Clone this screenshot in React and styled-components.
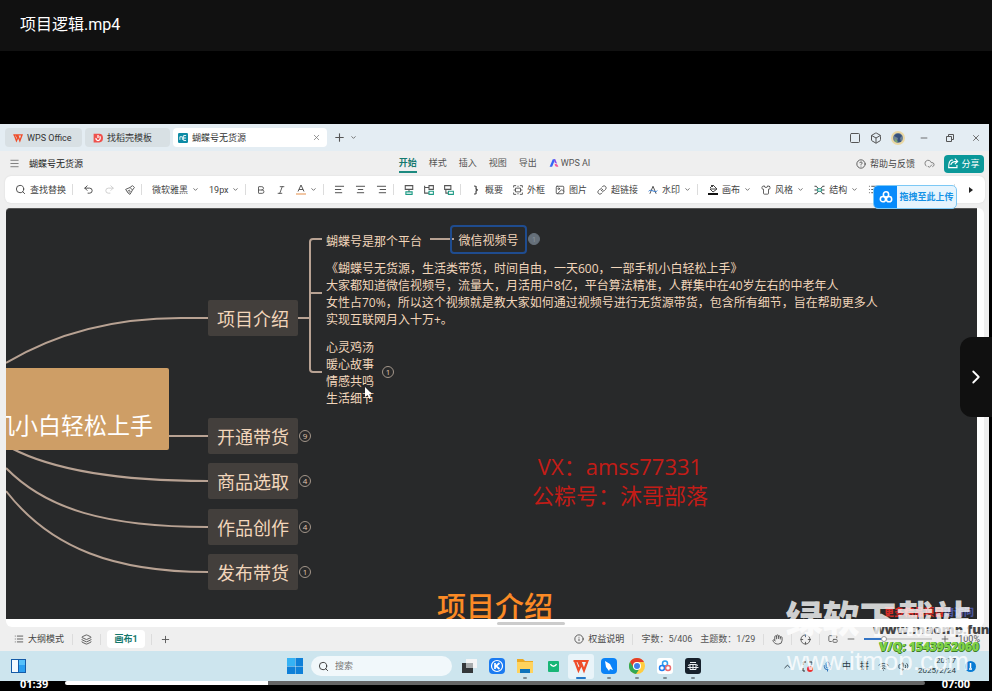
import React, { useState } from 'react';
import styled, { createGlobalStyle } from 'styled-components';
import {
  AlignCenter, AlignLeft, AlignRight, Bold, Box, ChevronDown, ChevronRight, ChevronUp, CircleHelp,
  CloudCheck, Copy, Crosshair, Hand, Image, Info, Italic, Layers, Link, List, Menu, Mic, Minus,
  PictureInPicture2, Plus, Redo2, Search, Shirt, Square, Undo2, Volume2, Wifi, X,
} from 'lucide-react';

const GlobalStyle = createGlobalStyle`
  * {
    box-sizing: border-box;
  }
  body {
    margin: 0;
    background-color: #000;
    font-family: Roboto, "Noto Sans CJK SC", sans-serif;
  }
  button, input, select {
    font: inherit;
    color: inherit;
    background: none;
    border: none;
    padding: 0;
    margin: 0;
  }
  svg {
    display: block;
    flex-shrink: 0;
  }
`
const Player = styled.div`
  position: relative;
  display: flex;
  flex-direction: column;
  min-height: 100vh;
  overflow: hidden;
`
const PlayerHeader = styled.header`
  display: flex;
  align-items: center;
  height: 51px;
  padding: 0 20px 2px;
  background-color: #111;
`
const PlayerTitle = styled.h1`
  margin: 0;
  color: #fff;
  font-size: 16px;
  font-weight: 400;
  line-height: 24px;
`
const Video = styled.main`
  position: relative;
  display: flex;
  flex-direction: column;
  margin: 73px 3px 0 0;
  background-color: #efefef;
  color: #444;
  font-size: 9px;
  line-height: 12px;
  white-space: nowrap;
`
const TabBar = styled.div`
  display: flex;
  align-items: center;
  gap: 3px;
  height: 27px;
  padding: 0 8px 0 5px;
  background-color: #e4edf3;
`
const Tab = styled.button`
  display: flex;
  align-items: center;
  gap: 4px;
  width: ${(props) => props.$width}px;
  height: 19px;
  padding: 0 6px 0 8px;
  border-radius: 4px;
  background-color: ${(props) => (props.$active ? '#fff' : '#d8e0e4')};
  color: #333;
  span {
    flex: 1;
    text-align: left;
  }
`
const ActiveTab = styled(Tab)`
  padding: 0 6px 0 5px;
`
const IconButton = styled.button`
  display: flex;
  align-items: center;
  justify-content: center;
  min-width: 10px;
  color: ${(props) => props.$color || '#555'};
`
const TabActions = styled.div`
  display: flex;
  align-items: center;
  gap: 2px;
  flex: 1;
  margin-left: 3px;
`
const WindowActions = styled.div`
  display: flex;
  align-items: center;
  gap: 9px;
`
const WindowControls = styled(WindowActions)`
  gap: 16px;
  margin-left: 11px;
`
const MenuBar = styled.div`
  display: grid;
  grid-template-columns: 1fr auto 1fr;
  align-items: center;
  height: 25px;
  padding: 0 5px 0 9px;
`
const DocName = styled.div`
  display: flex;
  align-items: center;
  gap: 9px;
  color: #222;
`
const MenuTabs = styled.nav`
  display: flex;
  gap: 12px;
  margin-right: 4px;
`
const MenuTab = styled.button`
  display: flex;
  align-items: center;
  gap: 2px;
  height: 18px;
  border-bottom: 2px solid ${(props) => (props.$active ? '#1d8a80' : 'transparent')};
  color: ${(props) => (props.$active ? '#15796f' : '#555')};
  font-weight: ${(props) => (props.$active ? 700 : 400)};
`
const MenuRight = styled.div`
  display: flex;
  align-items: center;
  justify-content: flex-end;
  gap: 9px;
  color: #333;
`
const ShareButton = styled.button`
  display: flex;
  align-items: center;
  justify-content: center;
  gap: 2px;
  width: 40px;
  height: 18px;
  border-radius: 4px;
  background-color: #0b9899;
  color: #fff;
`
const Toolbar = styled.div`
  display: flex;
  align-items: center;
  gap: 10px;
  height: 27px;
  margin: 0 4px 5px 5px;
  padding: 0 10px;
  border-radius: 6px;
  background-color: #fff;
  box-shadow: 0 0 2px rgba(0, 0, 0, 0.1);
  overflow: hidden;
`
const Tool = styled.button`
  display: flex;
  align-items: center;
  gap: 4px;
  color: #444;
`
const SelectTool = styled.label`
  display: flex;
  align-items: center;
  gap: 3px;
  select {
    appearance: none;
  }
`
const Divider = styled.i`
  width: 1px;
  height: 11px;
  margin-left: ${(props) => (props.$even ? 0 : -4)}px;
  background-color: #dcdcdc;
`
const Spacer = styled.div`
  flex: 1;
`
const UploadTip = styled.button`
  position: absolute;
  top: 61px;
  right: 32px;
  display: flex;
  align-items: center;
  width: 84px;
  height: 24px;
  border: 1px solid #7cc8f5;
  border-radius: 5px;
  background-color: #e6f4fd;
  color: #1592e6;
  font-weight: 700;
  overflow: hidden;
  span {
    flex: 1;
    text-align: center;
  }
`
const UploadLogo = styled.div`
  display: flex;
  align-items: center;
  justify-content: center;
  width: 23px;
  height: 24px;
  background-color: #078bfb;
  color: #fff;
`
const Sheet = styled.section`
  margin: 0 5px 0 6px;
  padding: 0 7px 8px 0;
  border-radius: 6px;
  background-color: #fff;
`
const Canvas = styled.div`
  position: relative;
  height: 411px;
  border-top: 1px solid #555;
  border-top-left-radius: 4px;
  background-color: #28292a;
  color: #f2d6bb;
  font-family: "Open Sans", "Noto Sans CJK SC", sans-serif;
  font-size: 12px;
  line-height: 17px;
  overflow: hidden;
`
const Branches = styled.svg`
  position: absolute;
  top: -1px;
  left: 0;
  width: 100%;
  height: 100%;
`
const Topic = styled.div`
  position: absolute;
  left: ${(props) => props.$x}px;
  top: ${(props) => props.$y}px;
  white-space: pre;
`
const MainTopic = styled(Topic)`
  display: flex;
  align-items: center;
  justify-content: center;
  width: 90px;
  height: 36px;
  padding-top: 2px;
  border-radius: 2px;
  background-color: #433f3c;
  font-size: 18px;
`
const RootTopic = styled(Topic)`
  display: flex;
  align-items: flex-end;
  justify-content: flex-end;
  width: 163px;
  height: 82px;
  padding: 8px 16px;
  border-radius: 0 2px 2px 0;
  background-color: #ce9e66;
  color: #fff;
  font-size: 23px;
  line-height: 34px;
  overflow: hidden;
`
const SelectedTopic = styled(Topic)`
  display: flex;
  align-items: center;
  justify-content: center;
  width: 77px;
  height: 29px;
  padding-top: 2px;
  border: 2px solid #1f4c8f;
  border-radius: 4px;
`
const Count = styled(Topic)`
  display: flex;
  align-items: center;
  justify-content: center;
  width: 12px;
  height: 12px;
  border: 1px solid ${(props) => (props.$filled ? '#66707a' : '#a3968a')};
  border-radius: 50%;
  background-color: ${(props) => (props.$filled ? '#66707a' : 'transparent')};
  color: ${(props) => (props.$filled ? '#89939c' : '#e0c8b0')};
  font-size: 8px;
  line-height: 10px;
`
const Contact = styled(Topic)`
  color: #c31c17;
  font-size: 22px;
  line-height: 29px;
  text-align: center;
`
const Caption = styled(Topic)`
  color: #fb8a25;
  font-size: 29px;
  font-weight: 500;
  line-height: 36px;
`
const ScrollThumb = styled.div`
  position: absolute;
  top: 498px;
  left: 497px;
  width: 68px;
  height: 3px;
  border-radius: 2px;
  background-color: #ccc;
`
const StatusBar = styled.footer`
  display: flex;
  align-items: center;
  gap: 8px;
  height: 24px;
  padding: 0 9px 0 14px;
  color: #555;
`
const SheetTab = styled.button`
  width: 38px;
  height: 18px;
  margin: 0 -2px;
  border-radius: 4px;
  background-color: #fff;
  color: #13776c;
  font-weight: 700;
`
const ZoomSlider = styled.input`
  appearance: none;
  width: 68px;
  height: 2px;
  background: linear-gradient(to right, #3475c5 ${(props) => props.value}%, #d0d0d0 ${(props) => props.value}%);
  &::-webkit-slider-thumb {
    appearance: none;
    width: 6px;
    height: 6px;
    border-radius: 50%;
    background-color: #fff;
    border: 1px solid #999;
  }
`
const Taskbar = styled.div`
  display: grid;
  grid-template-columns: 1fr auto 1fr;
  align-items: center;
  height: 30px;
  padding: 0 13px 0 11px;
  background-color: #cde5ee;
`
const TaskApps = styled.div`
  display: flex;
  align-items: center;
  padding-left: 7px;
`
const SearchBox = styled.label`
  display: flex;
  align-items: center;
  gap: 6px;
  width: 141px;
  height: 20px;
  margin: 0 3px 0 8px;
  padding: 0 7px;
  border-radius: 10px;
  background-color: #f1f8fb;
  color: #333;
  input {
    width: 90px;
    outline: none;
  }
  input::placeholder {
    color: #777;
  }
`
const AppButton = styled.button`
  display: flex;
  flex-direction: column;
  align-items: center;
  justify-content: space-between;
  width: 26px;
  height: 25px;
  margin: 0 1px;
  padding-top: 4px;
  border-radius: 3px;
  background-color: ${(props) => (props.$active ? '#e9f4f9' : 'transparent')};
  &::after {
    content: "";
    width: ${(props) => (props.$active ? 10 : 4)}px;
    height: 2px;
    border-radius: 1px;
    background-color: ${(props) => (props.$active ? '#2579c7' : props.$open ? '#7c8c94' : 'transparent')};
  }
`
const Tray = styled.div`
  display: flex;
  align-items: center;
  justify-content: flex-end;
  gap: 9px;
  color: #2b3a42;
`
const Clock = styled.time`
  font-size: 8px;
  line-height: 10px;
  text-align: right;
`
const Controls = styled.div`
  position: relative;
  display: flex;
  align-items: flex-start;
  height: 10px;
  padding: 0 22px 0 20px;
  color: #fff;
  font-family: "Open Sans", sans-serif;
  font-size: 11px;
  font-weight: 700;
  line-height: 6px;
`
const Seek = styled.input`
  appearance: none;
  flex: 1;
  min-width: 0;
  height: 4px;
  margin: 0 17px;
  border-radius: 2px;
  background: linear-gradient(to right, #fff ${(props) => props.$played}%, #666 ${(props) => props.$played}%);
  &::-webkit-slider-thumb {
    appearance: none;
    width: 0;
    height: 0;
  }
`
const NextButton = styled.button`
  position: absolute;
  top: 337px;
  right: 0;
  display: flex;
  align-items: center;
  justify-content: center;
  width: 32px;
  height: 80px;
  border-radius: 12px 0 0 12px;
  background-color: #101010;
  color: #fff;
`
const SiteMark = styled.div`
  position: absolute;
  right: 18px;
  bottom: 4px;
  width: 186px;
  color: rgba(255, 255, 255, 0.8);
  text-align: center;
  pointer-events: none;
`
const SiteName = styled.div`
  font-family: "Noto Sans CJK SC", sans-serif;
  font-size: 37px;
  font-weight: 900;
  line-height: 56px;
`
const SiteUrl = styled.div`
  font-family: "Liberation Sans", sans-serif;
  font-size: 26px;
  line-height: 32px;
`
const PromoMark = styled.div`
  position: absolute;
  right: 4px;
  bottom: 26px;
  width: 112px;
  font-family: "Open Sans", "Noto Sans CJK SC", sans-serif;
  text-align: center;
  font-weight: 800;
  pointer-events: none;
`
const PromoTitle = styled.div`
  color: #d62c26;
  font-size: 10px;
  line-height: 14px;
  em {
    color: #4a559f;
    font-style: normal;
  }
`
const PromoUrl = styled.div`
  color: #444;
  font-size: 13px;
  line-height: 20px;
`
const PromoContact = styled.div`
  color: #7ed348;
  font-size: 12px;
  line-height: 16px;
  text-shadow: 1px 0 #3d7a2a, 0 1px #3d7a2a;
`

const WpsLogo = ({ size = 10 }) => (
  <svg width={size} height={size} viewBox="0 0 16 16" fill="none" stroke="#ef4d2a" strokeWidth="2.2">
    <path d="M.5 3h5M2 3l3.500 9.500L8.500 6l2.500 6.500L14.500 3H7l2 4M5 3l3 6" />
  </svg>
);

const DocerLogo = () => (
  <svg width="10" height="10" viewBox="0 0 16 16">
    <path d="M1 1h9a6 7 0 0 1 0 14H1z" fill="#ef514c" />
    <path d="M8 3v5m3-3c2 5-1 7-3 7s-4-2-3-4" fill="none" stroke="#fff" strokeWidth="2" />
  </svg>
);

const MindLogo = () => (
  <svg width="10" height="10" viewBox="0 0 16 16">
    <rect width="16" height="16" rx="2" fill="#0d8ba5" />
    <path d="M3 6h4v5M3 6v5M9 4h4M9 8h4M9 12h4M9 4v8" fill="none" stroke="#fff" strokeWidth="1.4" />
  </svg>
);

const AiLogo = () => (
  <svg width="10" height="10" viewBox="0 0 16 16">
    <path d="M1 14 6 2h4L5 14z" fill="#3565f5" />
    <path d="M8 2h2l3 7-4-2z" fill="#8547e8" />
    <path d="M9 9c4 0 5 2 6 5-4 0-6-1-6-5z" fill="#f2559b" />
  </svg>
);

const Avatar = () => (
  <svg width="14" height="14" viewBox="0 0 14 14">
    <circle cx="7" cy="7" r="6" fill="#6e8296" stroke="#ead8a4" strokeWidth="2" />
    <path d="M3 5c2-3 6-3 8 0L9 7l1 4H6l1-4z" fill="#35517d" />
    <path d="m4 7 3 4H4z" fill="#78a770" />
  </svg>
);

const BrushIcon = () => (
  <svg width="10" height="10" viewBox="0 0 16 16" fill="none" stroke="#555" strokeWidth="1.5">
    <path d="M1 7 8 4l4 4-4 7-3-2-4-6zM8 4l4-3 3 3-3 4M4 10l4-2M6 12l3-2" />
  </svg>
);

const FontColorIcon = () => (
  <svg width="10" height="11" viewBox="0 0 10 11" fill="none">
    <path d="M2 7.500 5 1l3 6.500M3 5.500h4" stroke="#555" />
    <path d="M0 10h10" stroke="#f2c7a4" strokeWidth="2" />
  </svg>
);

// insert topic buttons, each one nests the green box in another place
const TopicIcon = ({ kind }) => (
  <svg width="10" height="10" viewBox="0 0 16 16" fill="none" strokeWidth="1.7">
    {kind === 'parent' && <><path d="M2 1h12v6H2zM8 7v4" stroke="#555" /><path d="M3 11h10v4H3z" stroke="#1b9a84" /></>}
    {kind === 'child' && <><path d="M1 1v12h7M1 4h7M8 1h7v6H8z" stroke="#555" /><path d="M8 10h7v5H8z" stroke="#1b9a84" /></>}
    {kind === 'sibling' && <><path d="M1 1h10v6H1zM3 7v6h4" stroke="#555" /><path d="M7 10h8v5H7z" stroke="#1b9a84" /></>}
  </svg>
);

const BraceIcon = () => (
  <svg width="10" height="10" viewBox="0 0 10 10" fill="none" stroke="#444" strokeWidth="1.200">
    <path d="M3 1c3 0 2 1 2 2s0 2 2 2c-2 0-2 1-2 2s1 2-2 2" />
  </svg>
);

const FrameIcon = () => (
  <svg width="10" height="10" viewBox="0 0 16 16" fill="none" stroke="#555" strokeWidth="1.5">
    <path d="M1 4V1h4M11 1h4v3M15 12v3h-4M5 15H1v-3M4 5h8v6H4zM1 8h3M12 8h3M7 2h2M7 14h2" />
  </svg>
);

const WatermarkIcon = () => (
  <svg width="10" height="10" viewBox="0 0 16 16" fill="none" stroke="#555" strokeWidth="1.6">
    <path d="m3 14 5-12 5 12" />
    <path d="M1 10c4-5 10 4 14-1" stroke="#3379d0" />
  </svg>
);

const BackdropIcon = () => (
  <svg width="10" height="11" viewBox="0 0 10 11" fill="none">
    <path d="M2 4 5 1l4 4-4 3-3-3h6M3 1l2 2" stroke="#444" />
    <path d="M0 10h10" stroke="#111" strokeWidth="2" />
  </svg>
);

const StructureIcon = () => (
  <svg width="11" height="10" viewBox="0 0 16 16" fill="none" stroke="#444" strokeWidth="1.6">
    <path d="M0 2h3l3 4M0 14h3l3-4M16 2h-3l-3 4M16 14h-3l-3-4M0 8h5M11 8h5" />
    <path d="M5 6h6v4H5z" stroke="#1b9a84" />
  </svg>
);

const ShareIcon = () => (
  <svg width="11" height="11" viewBox="0 0 16 16" fill="none" stroke="#fff" strokeWidth="1.7">
    <path d="M7 3H5C2 4 1 7 1 14h12v-4M4 10c1-4 4-5 9-5M10 1l4 4-4 4" />
  </svg>
);

const NetdiskLogo = () => (
  <svg width="14" height="14" viewBox="0 0 16 16" fill="none" stroke="currentColor" strokeWidth="1.8">
    <circle cx="8" cy="5" r="3" />
    <circle cx="4.500" cy="10.500" r="3" />
    <circle cx="11.500" cy="10.500" r="3" />
  </svg>
);

const WidgetsIcon = () => (
  <svg width="16" height="16" viewBox="0 0 16 16">
    <rect x="0" y="1" width="15" height="14" fill="#155ba7" />
    <path d="M1 2h6v12H1z" fill="#f5faff" />
    <path d="M8 2h6v12H8z" fill="#2b9ff0" />
    <path d="M8 2h6v5H8z" fill="#56c1fa" />
  </svg>
);

const WindowsIcon = () => (
  <svg width="16" height="16" viewBox="0 0 16 16" fill="#0f80d8">
    <path d="M0 0h8v8H0z" fill="#35b2f4" />
    <path d="M8.500 0H16v8H8.500zM0 8.500h8V16H0zM8.500 8.500H16V16H8.500z" />
  </svg>
);

const appIcons = {
  '任务视图': (
    <svg width="16" height="16" viewBox="0 0 16 16">
      <path d="M5 1h11v9H5z" fill="#f4f5f6" />
      <path d="M1 5h11v10H1z" fill="#33373a" />
      <path d="M5 5h7v5H5z" fill="#a7abad" />
    </svg>
  ),
  '酷狗音乐': (
    <svg width="16" height="16" viewBox="0 0 16 16" fill="none" stroke="#fff">
      <rect width="16" height="16" rx="4" fill="#1b7bf1" stroke="none" />
      <circle cx="8" cy="8" r="5.500" strokeWidth="1.200" />
      <path d="M6 5v6M10.500 5 7 8l3.500 3" strokeWidth="1.700" />
    </svg>
  ),
  '文件资源管理器': (
    <svg width="16" height="16" viewBox="0 0 16 16">
      <path d="M0 1h6l2 2h8v12H0z" fill="#eba923" />
      <path d="M0 4h16v11H0z" fill="#ffd35d" />
      <path d="M3 15v-4h10v4z" fill="#0c72bb" />
    </svg>
  ),
  '应用商店': (
    <svg width="16" height="16" viewBox="0 0 16 16">
      <rect x="3" y="3" width="11" height="11" rx="1" fill="#18b676" />
      <path d="M5.500 6c1 3 5 3 6 0" fill="none" stroke="#fff" strokeWidth="1.300" />
    </svg>
  ),
  'WPS Office': <WpsLogo size={16} />,
  '迅雷': (
    <svg width="16" height="16" viewBox="0 0 16 16">
      <rect width="16" height="16" rx="4" fill="#0b83f7" />
      <path d="m4 3 5 3 3 6-3-1-1 2-3-4z" fill="#fff" />
    </svg>
  ),
  'Chrome': (
    <svg width="16" height="16" viewBox="0 0 16 16">
      <circle cx="8" cy="8" r="8" fill="#ffcd40" />
      <path d="M8 0a8 8 0 0 1 7 4H8a4 4 0 0 0-3.500 6L1 4a8 8 0 0 1 7-4z" fill="#e33e2b" />
      <path d="M1 4a8 8 0 0 0 6 12l4-6H5z" fill="#31a853" />
      <circle cx="8" cy="8" r="4" fill="#fff" />
      <circle cx="8" cy="8" r="3" fill="#3e7fe8" />
    </svg>
  ),
  '百度网盘': (
    <svg width="16" height="16" viewBox="0 0 16 16" fill="none" strokeWidth="1.500">
      <rect width="16" height="16" rx="3" fill="#fff" />
      <circle cx="8" cy="5.500" r="2.500" stroke="#2f9fee" />
      <circle cx="5" cy="10" r="2.500" stroke="#1f7ff0" />
      <circle cx="11" cy="10" r="2.500" stroke="#e86a70" />
    </svg>
  ),
  '剪辑': (
    <svg width="16" height="16" viewBox="0 0 16 16" fill="none" stroke="#e9eef2">
      <rect width="16" height="16" rx="3" fill="#17212c" stroke="none" />
      <path d="M5 4.500h6M3 7.500l2-1h6l2 1M2.500 9.500h11M5 7v4.500h6V7M8 6v5" />
    </svg>
  ),
};

const Chevron = () => <ChevronDown size={7} color="#666" strokeWidth={3} />;

const ToolItem = ({ icon, label, title, menu }) => (
  <Tool aria-label={label || title}>
    {icon}
    {label}
    {menu && <Chevron />}
  </Tool>
);

const topics = [
  { title: '项目介绍', y: 91 },
  { title: '开通带货', y: 209, count: 9 },
  { title: '商品选取', y: 254, count: 4 },
  { title: '作品创作', y: 300, count: 4 },
  { title: '发布带货', y: 345, count: 1 },
];

const summary = `《蝴蝶号无货源，生活类带货，时间自由，一天600，一部手机小白轻松上手》
大家都知道微信视频号，流量大，月活用户8亿，平台算法精准，人群集中在40岁左右的中老年人
女性占70%，所以这个视频就是教大家如何通过视频号进行无货源带货，包含所有细节，旨在帮助更多人
实现互联网月入十万+。`;

const MindMap = () => (
  <Canvas>
    <Branches fill="none" stroke="#b8a293" strokeWidth="2">
      <path d="M0 155C45 128 100 110 175 110H202" />
      <path d="M163 228H202" />
      <path d="M5 240C45 261 110 273 202 273" />
      <path d="M0 260C40 301 100 319 202 319" />
      <path d="M0 283C45 341 110 364 202 364" />
      <path d="M292 110H304M316 31H307Q304 31 304 34V161Q304 164 307 164H316M304 85H316M424 31H448" />
    </Branches>
    <RootTopic $x={0} $y={159}>手机小白轻松上手</RootTopic>
    {topics.map((topic) => (
      <React.Fragment key={topic.title}>
        <MainTopic $x={202} $y={topic.y}>{topic.title}</MainTopic>
        {topic.count && <Count $x={293} $y={topic.y + 12}>{topic.count}</Count>}
      </React.Fragment>
    ))}
    <Topic $x={320} $y={24}>蝴蝶号是那个平台</Topic>
    <SelectedTopic $x={444} $y={16}>微信视频号</SelectedTopic>
    <Count $x={522} $y={24} $filled>1</Count>
    <Topic $x={320} $y={51}>{summary}</Topic>
    <Topic $x={320} $y={130}>{'心灵鸡汤\n暖心故事\n情感共鸣\n生活细节'}</Topic>
    <Count $x={376} $y={157}>1</Count>
    <Contact $x={526} $y={243}>{'VX：amss77331\n公粽号：沐哥部落'}</Contact>
    <Caption $x={431} $y={380}>项目介绍</Caption>
    <Branches>
      <path d="M359 179v10l2.500-2 2 4 1.500-1-2-4h3z" fill="#fff" />
    </Branches>
  </Canvas>
);

const App = () => {
  const [zoom, setZoom] = useState(27);
  const [time, setTime] = useState(99);

  return (
    <Player>
      <GlobalStyle />
      <PlayerHeader>
        <PlayerTitle>项目逻辑.mp4</PlayerTitle>
      </PlayerHeader>
      <Video>
        <TabBar>
          <Tab $width={77}><WpsLogo /><span>WPS Office</span></Tab>
          <Tab $width={85}><DocerLogo /><span>找稻壳模板</span></Tab>
          <ActiveTab $width={154} $active><MindLogo /><span>蝴蝶号无货源</span><X size={9} color="#777" /></ActiveTab>
          <TabActions>
            <IconButton aria-label="新建"><Plus size={13} /></IconButton>
            <IconButton aria-label="更多标签"><Chevron /></IconButton>
          </TabActions>
          <WindowActions>
            <IconButton aria-label="侧栏"><Square size={12} /></IconButton>
            <IconButton aria-label="应用"><Box size={12} /></IconButton>
            <IconButton aria-label="账号"><Avatar /></IconButton>
          </WindowActions>
          <WindowControls>
            <IconButton aria-label="最小化"><Minus size={10} /></IconButton>
            <IconButton aria-label="还原">
              <svg width="10" height="10" viewBox="0 0 10 10" fill="none" stroke="currentColor">
                <path d="M1.500 3.500h5v5h-5zM3.500 3V1.500h5v5H7" />
              </svg>
            </IconButton>
            <IconButton aria-label="关闭"><X size={10} /></IconButton>
          </WindowControls>
        </TabBar>

        <MenuBar>
          <DocName>
            <IconButton aria-label="菜单" $color="#777"><Menu size={11} /></IconButton>
            蝴蝶号无货源
          </DocName>
          <MenuTabs>
            <MenuTab $active>开始</MenuTab>
            <MenuTab>样式</MenuTab>
            <MenuTab>插入</MenuTab>
            <MenuTab>视图</MenuTab>
            <MenuTab>导出</MenuTab>
            <MenuTab><AiLogo />WPS AI</MenuTab>
          </MenuTabs>
          <MenuRight>
            <Tool><CircleHelp size={10} />帮助与反馈</Tool>
            <IconButton aria-label="已保存" $color="#777"><CloudCheck size={11} /></IconButton>
            <ShareButton><ShareIcon />分享</ShareButton>
          </MenuRight>
        </MenuBar>

        <Toolbar>
          <ToolItem icon={<Search size={11} />} label="查找替换" />
          <Divider />
          <ToolItem icon={<Undo2 size={11} />} title="撤销" />
          <ToolItem icon={<Redo2 size={11} color="#ccc" />} title="恢复" />
          <ToolItem icon={<BrushIcon />} title="格式刷" />
          <Divider />
          <SelectTool>
            <select aria-label="字体"><option>微软雅黑</option></select>
            <Chevron />
          </SelectTool>
          <SelectTool>
            <select aria-label="字号"><option>19px</option></select>
            <Chevron />
          </SelectTool>
          <Divider />
          <ToolItem icon={<Bold size={10} />} title="加粗" />
          <ToolItem icon={<Italic size={10} />} title="斜体" />
          <ToolItem icon={<FontColorIcon />} title="字体颜色" menu />
          <Divider />
          <ToolItem icon={<AlignLeft size={11} />} title="左对齐" />
          <ToolItem icon={<AlignCenter size={11} />} title="居中" />
          <ToolItem icon={<AlignRight size={11} />} title="右对齐" />
          <Divider />
          <ToolItem icon={<TopicIcon kind="parent" />} title="父主题" />
          <ToolItem icon={<TopicIcon kind="child" />} title="子主题" />
          <ToolItem icon={<TopicIcon kind="sibling" />} title="同级主题" />
          <Divider />
          <ToolItem icon={<BraceIcon />} label="概要" />
          <ToolItem icon={<FrameIcon />} label="外框" />
          <ToolItem icon={<Image size={10} />} label="图片" />
          <ToolItem icon={<Link size={10} />} label="超链接" />
          <ToolItem icon={<WatermarkIcon />} label="水印" menu />
          <Divider />
          <ToolItem icon={<BackdropIcon />} label="画布" menu />
          <ToolItem icon={<Shirt size={10} />} label="风格" menu />
          <ToolItem icon={<StructureIcon />} label="结构" menu />
          <ToolItem icon={<List size={11} />} title="编号" />
          <Spacer />
          <Divider />
          <IconButton aria-label="更多工具" $color="#222">
            <svg width="5" height="6" viewBox="0 0 5 6" fill="currentColor"><path d="m1 0 4 3-4 3z" /></svg>
          </IconButton>
        </Toolbar>

        <Sheet>
          <MindMap />
        </Sheet>
        <ScrollThumb />
        <UploadTip>
          <UploadLogo><NetdiskLogo /></UploadLogo>
          <span>拖拽至此上传</span>
        </UploadTip>

        <StatusBar>
          <Tool><List size={10} />大纲模式</Tool>
          <Divider $even />
          <IconButton aria-label="图层"><Layers size={11} /></IconButton>
          <Divider $even />
          <SheetTab>画布1</SheetTab>
          <Divider $even />
          <IconButton aria-label="新建画布"><Plus size={11} /></IconButton>
          <Spacer />
          <Tool><Info size={10} />权益说明</Tool>
          <Divider $even />
          <span>字数：5/406</span>
          <span>主题数：1/29</span>
          <Divider $even />
          <IconButton aria-label="拖动"><Hand size={11} /></IconButton>
          <Divider $even />
          <IconButton aria-label="定位"><Crosshair size={11} /></IconButton>
          <Divider $even />
          <IconButton aria-label="导航窗口"><PictureInPicture2 size={10} /></IconButton>
          <IconButton aria-label="缩小"><Minus size={10} /></IconButton>
          <ZoomSlider type="range" aria-label="缩放" value={zoom} onChange={(e) => setZoom(e.target.value)} />
          <IconButton aria-label="放大"><Plus size={10} /></IconButton>
          <span>100%</span>
        </StatusBar>

        <Taskbar>
          <IconButton as="div"><WidgetsIcon /><Spacer /></IconButton>
          <TaskApps>
            <IconButton aria-label="开始菜单"><WindowsIcon /></IconButton>
            <SearchBox>
              <Search size={11} />
              <input aria-label="搜索" placeholder="搜索" />
            </SearchBox>
            {Object.keys(appIcons).map((name, index) => (
              <AppButton key={name} aria-label={name} $active={name === 'WPS Office'} $open={index === 2 || index > 4}>
                {appIcons[name]}
              </AppButton>
            ))}
          </TaskApps>
          <Tray>
            <ChevronUp size={11} />
            <svg width="11" height="11" viewBox="0 0 11 11">
              <path d="M1 4V1h3M7 1h3v3M1 7v3h2" fill="none" stroke="#333" />
              <circle cx="8" cy="8" r="3" fill="#ee2f2f" />
            </svg>
            <Mic size={11} color="#2467b3" />
            <span>中</span>
            <span>拼</span>
            <Wifi size={11} />
            <Volume2 size={11} />
            <Clock>20:17<br />2025/2/24</Clock>
            <svg width="11" height="11" viewBox="0 0 11 11">
              <circle cx="5.500" cy="5.500" r="5.500" fill="#087bd4" />
              <path d="M5.500 2v5M4 8h3" stroke="#fff" strokeWidth="1.500" />
            </svg>
          </Tray>
        </Taskbar>

        <PromoMark>
          <PromoTitle>更多精品项目<em>请访问</em></PromoTitle>
          <PromoUrl>www.maomp.fun</PromoUrl>
          <PromoContact>V/Q: 1543952060</PromoContact>
        </PromoMark>
        <SiteMark>
          <SiteName>绿软下载站</SiteName>
          <SiteUrl>www.itmop.com</SiteUrl>
        </SiteMark>
      </Video>
      <Controls>
        <span>01:39</span>
        <Seek
          type="range"
          aria-label="播放进度"
          max={420}
          value={time}
          $played={time / 4.2}
          onChange={(e) => setTime(e.target.value)}
        />
        <span>07:00</span>
      </Controls>
      <NextButton aria-label="下一个"><ChevronRight size={22} /></NextButton>
    </Player>
  );
};

export default App;
